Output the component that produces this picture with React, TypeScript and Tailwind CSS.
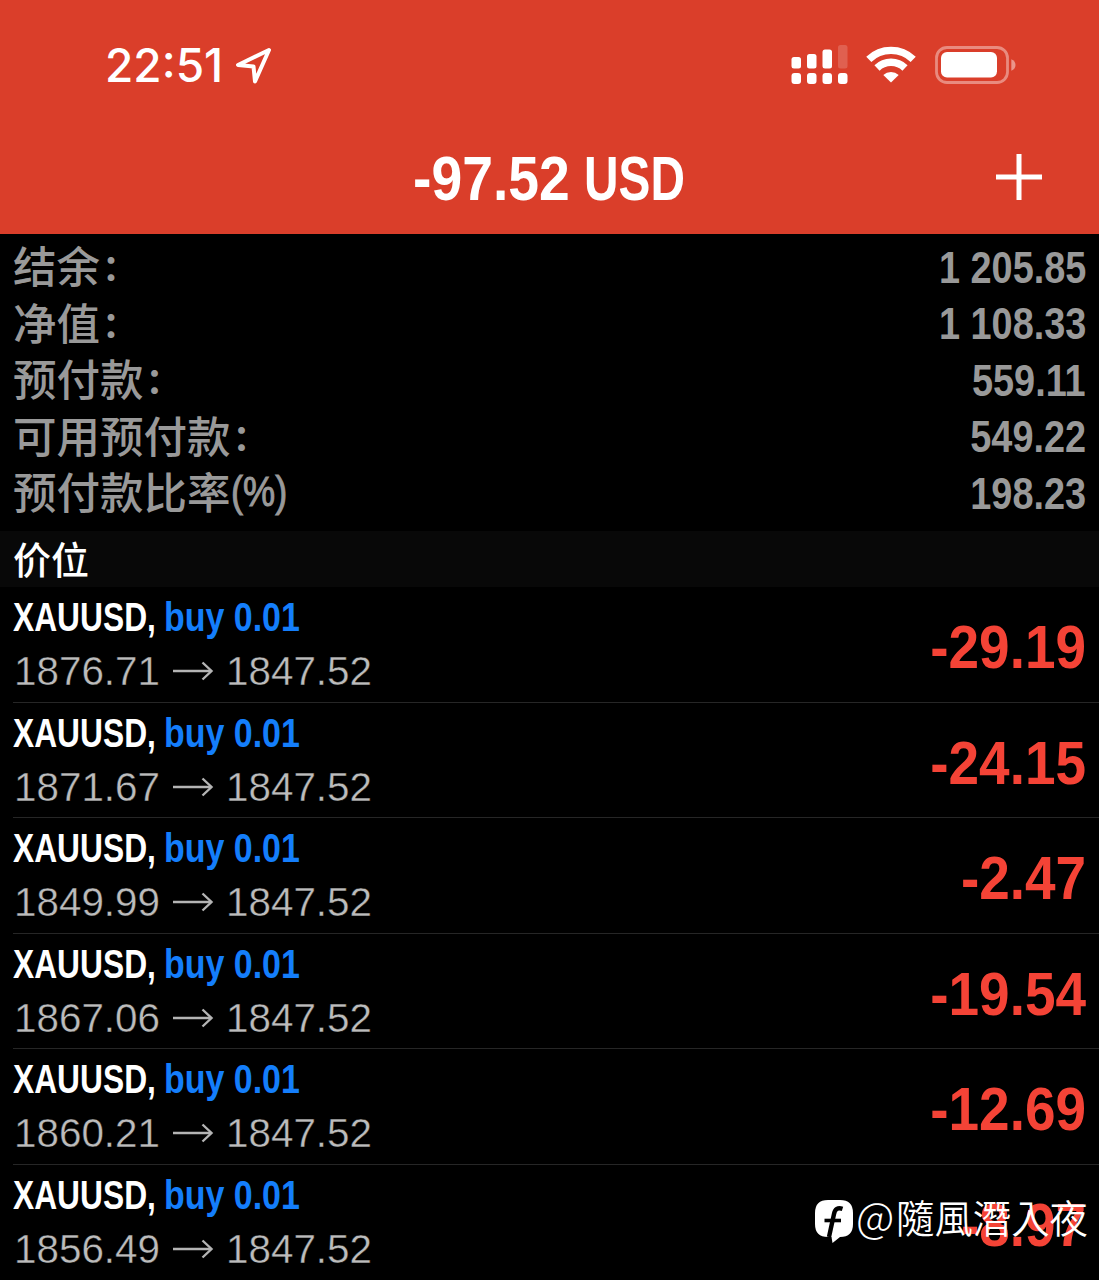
const summary = [
  { label: '结余', mark: '：', value: '1 205.85' },
  { label: '净值', mark: '：', value: '1 108.33' },
  { label: '预付款', mark: '：', value: '559.11' },
  { label: '可用预付款', mark: '：', value: '549.22' },
  { label: '预付款比率', mark: '(%)', value: '198.23' },
];

const positions = [
  { open: '1876.71', profit: '-29.19' },
  { open: '1871.67', profit: '-24.15' },
  { open: '1849.99', profit: '-2.47' },
  { open: '1867.06', profit: '-19.54' },
  { open: '1860.21', profit: '-12.69' },
  { open: '1856.49', profit: '-8.97' },
];

function LocationIcon() {
  return (
    <svg className="ml-[12px] mt-px h-[38px] w-[38px]" viewBox="0 0 38 38" fill="none" stroke="white" strokeWidth="4" strokeLinejoin="round">
      <path d="M34 3 L3 18 L18.5 19.5 L20 34.5 Z" />
    </svg>
  );
}

function SignalIcon() {
  return (
    <svg className="h-[40px] w-[58px]" viewBox="0 0 58 40" fill="white">
      <rect x="1.5" y="12" width="9.5" height="11.5" rx="2.5" />
      <rect x="17" y="9" width="9.5" height="14.5" rx="2.5" />
      <rect x="32.5" y="4.5" width="9.5" height="19" rx="2.5" />
      <rect x="48" y="0" width="9.5" height="23.5" rx="2.5" opacity="0.18" />
      <rect x="1.5" y="28" width="9.5" height="11" rx="3" />
      <rect x="17" y="28" width="9.5" height="11" rx="3" />
      <rect x="32.5" y="28" width="9.5" height="11" rx="3" />
      <rect x="48" y="28" width="9.5" height="11" rx="3" />
    </svg>
  );
}

function WifiIcon() {
  return (
    <svg className="ml-[18px] h-[38px] w-[50px]" viewBox="0 0 50 38">
      <g fill="none" stroke="white" strokeWidth="7.4">
        <path d="M2.8 13.3 A32 32 0 0 1 47.2 13.3" />
        <path d="M11 22 A20 20 0 0 1 39 22" />
      </g>
      <path d="M25 36.5 L17.3 29 A11.5 11.5 0 0 1 32.7 29 Z" fill="white" />
    </svg>
  );
}

function BatteryIcon() {
  return (
    <svg className="ml-[19px] h-[38px] w-[82px]" viewBox="0 0 82 38">
      <rect x="1.5" y="1.5" width="71" height="35" rx="10.5" fill="none" stroke="white" strokeOpacity="0.4" strokeWidth="2.8" />
      <rect x="6" y="6" width="56" height="25.5" rx="6" fill="white" />
      <path d="M76.3 13.2 Q80.5 15 80.5 19 Q80.5 23 76.3 24.8 Z" fill="white" opacity="0.45" />
    </svg>
  );
}

function ArrowIcon() {
  return (
    <svg className="h-[20px] w-[42px]" viewBox="0 0 42 20" fill="none" stroke="#b4b4b4" strokeWidth="2.4">
      <path d="M0 10 H38" />
      <path d="M29.5 1.5 L38.5 10 L29.5 18.5" />
    </svg>
  );
}

function BadgeIcon() {
  return (
    <svg className="mt-[10px] h-[43px] w-[38px]" viewBox="0 0 38 43">
      <path d="M13 0 H25 Q38 0 38 13 V24 Q38 37 25 37 L17.5 43 L16.5 37 H13 Q0 37 0 24 V13 Q0 0 13 0 Z" fill="white" />
      <path d="M27.5 8.8 Q20.5 6.5 19 14 L14 37" fill="none" stroke="black" strokeWidth="4.4" />
      <path d="M9.5 20.5 H26" stroke="black" strokeWidth="3.6" />
    </svg>
  );
}

export default function App() {
  return (
    <div className="relative h-[1280px] w-[1099px] overflow-hidden bg-black font-['Liberation_Sans','Noto_Sans_CJK_SC',sans-serif] whitespace-nowrap">
      <header className="h-[234px] bg-[#da3e2a] text-white">
        <div className="flex h-[130px] items-center pl-[105px] pr-[82px]">
          <span className="font-['Inter',sans-serif] text-[46px] font-medium">22:51</span>
          <LocationIcon />
          <div className="ml-auto flex items-center">
            <SignalIcon />
            <WifiIcon />
            <BatteryIcon />
          </div>
        </div>
        <div className="flex h-[94px] items-center justify-between pl-[413px] pr-[56px]">
          <h1 className="flex pt-[2px] text-[62.5px] font-bold leading-[96px]">
            <span className="w-[171px] origin-left scale-x-[.885]">-97.52</span>
            <span className="origin-left scale-x-[.765]">USD</span>
          </h1>
          <svg className="-mt-px h-[48px] w-[48px]" viewBox="0 0 48 48" stroke="white" strokeWidth="5">
            <path d="M24 1 V47 M1 24 H47" />
          </svg>
        </div>
      </header>

      <section className="flex h-[297px] flex-col pl-[13px] pr-[13px] pt-[5px] text-[#999]">
        {summary.map((row) => (
          <div key={row.label} className="flex h-[56.5px] items-center justify-between">
            <span className="flex font-['Noto_Sans_CJK_SC',sans-serif] text-[43.5px] font-medium leading-[52px]">
              <span className="-mt-[4px]">{row.label}</span>
              {row.mark === '：' ? (
                <span className="-mt-[4px] ml-[2px] text-[36px] font-bold">{row.mark}</span>
              ) : (
                <span className="-mt-[3px] origin-left scale-x-[.85] font-['Liberation_Sans',sans-serif] text-[42.5px] [-webkit-text-stroke:1px_#999]">{row.mark}</span>
              )}
            </span>
            <span className="origin-right scale-x-[.87] pt-px text-[43.5px] font-bold leading-[56px]">{row.value}</span>
          </div>
        ))}
      </section>

      <h2 className="flex h-[56px] items-center bg-[#080808] pl-[13px] font-['Noto_Sans_CJK_SC',sans-serif] text-[38px] font-medium leading-[56px] text-white">
        <span className="-mt-[3px]">价位</span>
      </h2>

      <section className="pl-[13px]">
        {positions.map((p) => (
          <div key={p.open} className="flex h-[115.6px] items-start justify-between border-b border-[#262626] pr-[13px]">
            <div>
              <div className="flex h-[60px] text-[41.5px] font-bold leading-[60px]">
                <span className="w-[151px] origin-left scale-x-[.765] text-white">XAUUSD,</span>
                <span className="origin-left scale-x-[.818] text-[#147efb]">buy 0.01</span>
              </div>
              <div className="flex h-[48px] items-center text-[41px] leading-[48px] text-[#bcbcbc]">
                <span className="ml-px w-[159px] origin-left scale-x-[.985] [-webkit-text-stroke:0.4px_black]">{p.open}</span>
                <ArrowIcon />
                <span className="ml-[11px] origin-left scale-x-[.985] [-webkit-text-stroke:0.4px_black]">1847.52</span>
              </div>
            </div>
            <span className="origin-right scale-x-[.9] text-[61px] font-bold leading-[121px] text-[#f44336]">{p.profit}</span>
          </div>
        ))}
      </section>

      <div className="absolute left-[815px] top-[1190px] flex items-start text-white">
        <BadgeIcon />
        <span className="ml-[3px] w-[40px] origin-left font-['Noto_Sans_CJK_TC',sans-serif] text-[42px] font-light leading-[50px]">@</span>
        <span className="font-['Noto_Sans_CJK_TC',sans-serif] text-[38.4px] font-[350] leading-[52px]">隨風潛入夜</span>
      </div>
    </div>
  );
}
